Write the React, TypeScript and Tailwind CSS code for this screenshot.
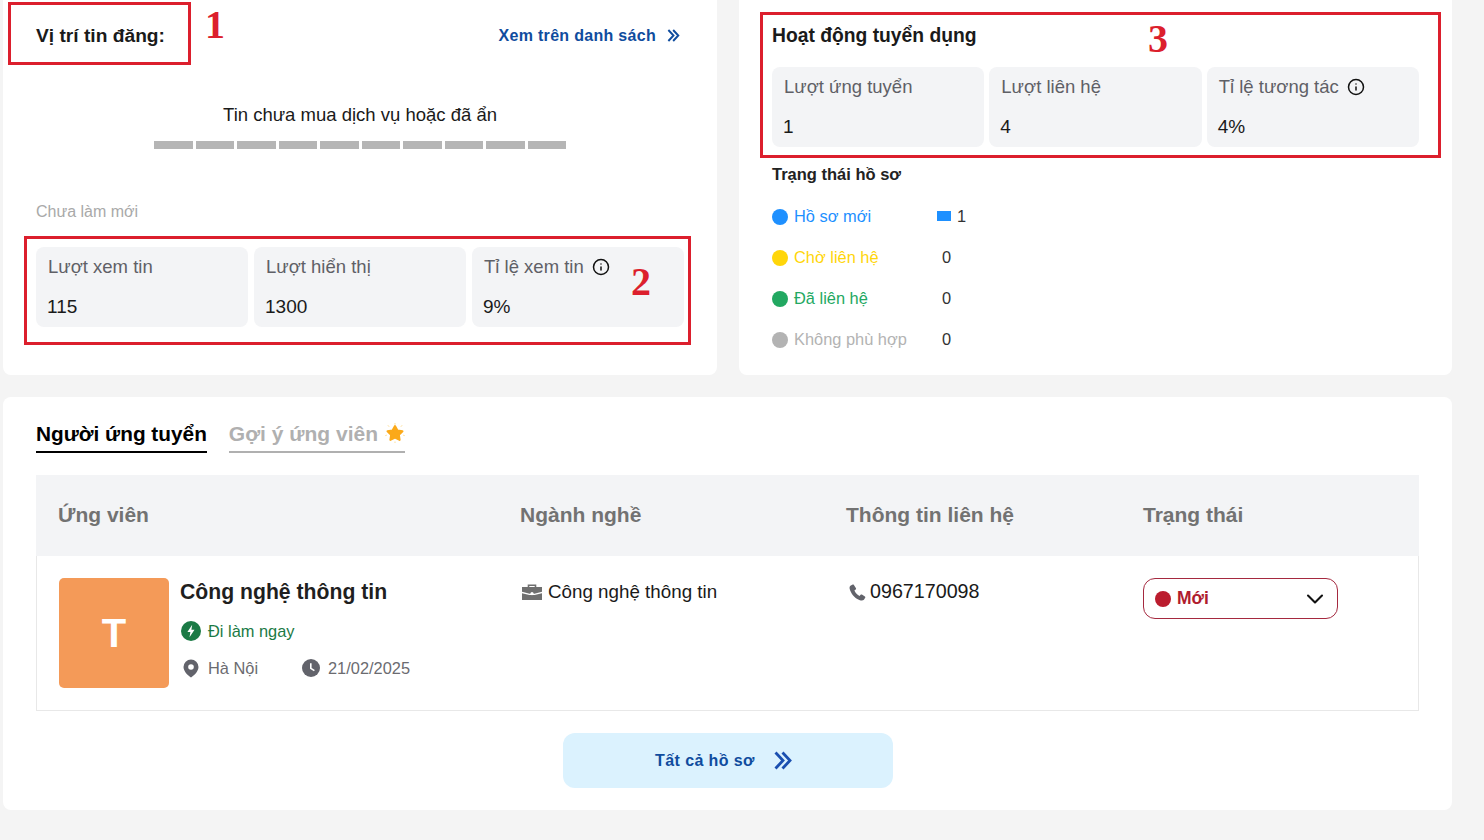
import { ChevronDown, Info } from "lucide-react";

const font = "font-['Liberation_Sans',Arial,sans-serif]";
const annotationNumber = "absolute font-['Liberation_Serif',serif] text-[40px] leading-none font-bold text-[#dc1f2d]";
const annotationBox = "absolute border-[3px] border-[#dc1f2d]";

function StatCard({ label, value, info }: { label: string; value: string; info?: boolean }) {
  return (
    <div className="flex h-20 flex-col rounded-lg bg-[#f3f4f6] px-3 pt-2">
      <div className="flex h-[24px] items-center gap-2 text-[18.5px] text-[#5f6066]">
        <span>{label}</span>
        {info && <Info size={18} strokeWidth={2} className="text-[#111]" />}
      </div>
      <div className="mt-4 -ml-px text-[19px] leading-6 text-[#1a1a1a]">{value}</div>
    </div>
  );
}

const statuses = [
  { label: "Hồ sơ mới", dot: "bg-[#1e90ff]", text: "text-[#1e90ff]", count: 1 },
  { label: "Chờ liên hệ", dot: "bg-[#ffd60a]", text: "text-[#ffd60a]", count: 0 },
  { label: "Đã liên hệ", dot: "bg-[#22a861]", text: "text-[#22a861]", count: 0 },
  { label: "Không phù hợp", dot: "bg-[#b3b3b3]", text: "text-[#b3b3b3]", count: 0 },
];

function DoubleChevron({ className }: { className: string }) {
  return (
    <svg viewBox="0 0 18 19" fill="none" stroke="currentColor" strokeWidth="2.8" className={className}>
      <path d="M1.5 1.5 9 9.5l-7.5 8" />
      <path d="M8.5 1.5 16 9.5l-7.5 8" />
    </svg>
  );
}

function BoltIcon() {
  return (
    <svg width="20" height="20" viewBox="0 0 20 20">
      <circle cx="10" cy="10" r="10" fill="#1b7a45" />
      <path d="M11.2 3.8 6.4 11h3l-.9 5.2 5-7.4h-3.1z" fill="#fff" />
    </svg>
  );
}

function PinIcon() {
  return (
    <svg width="16" height="19" viewBox="0 0 16 19">
      <path d="M8 0.5a7.5 7.5 0 0 0-7.5 7.5c0 4.6 5 9 7.5 10.5 2.5-1.5 7.5-5.9 7.5-10.5A7.5 7.5 0 0 0 8 0.5z" fill="#62636b" />
      <circle cx="8" cy="8" r="2.8" fill="#fff" />
    </svg>
  );
}

function ClockIcon() {
  return (
    <svg width="18" height="18" viewBox="0 0 18 18">
      <circle cx="9" cy="9" r="9" fill="#62636b" />
      <path d="M8.8 4.2v5.2l3.6 2.2" fill="none" stroke="#fff" strokeWidth="1.6" />
    </svg>
  );
}

function BriefcaseIcon() {
  return (
    <svg width="20" height="16" viewBox="0 0 20 16">
      <path d="M6.5 3V1.2h7V3" fill="none" stroke="#6f6f6f" strokeWidth="1.6" />
      <path d="M0 3h20v4.8l-7.6 1.9H7.6L0 7.8z" fill="#6f6f6f" />
      <path d="M0 9.2l7.4 1.9h5.2L20 9.2V16H0z" fill="#6f6f6f" />
      <circle cx="10" cy="9.6" r="1.6" fill="#fff" />
    </svg>
  );
}

function PhoneIcon() {
  return (
    <svg width="17" height="17" viewBox="0 0 17 17">
      <path d="M3.7.6 1.4 1.7C.4 2.3.3 4 1.1 6.2c1.9 5 5.5 8.6 9.8 10 1.7.5 3.2.4 4-.5l1.3-1.9c.3-.5.2-1-.3-1.3l-3-1.9c-.4-.3-.9-.2-1.3.2l-1 1.2c-2.2-.9-4.2-3-5.2-5.5l1.3-1c.4-.4.5-.9.3-1.3L4.9 1c-.3-.5-.8-.6-1.2-.4z" fill="#62636b" />
    </svg>
  );
}

function StarIcon() {
  return (
    <svg width="20" height="20" viewBox="0 0 20 20">
      <path d="M10 3l2.5 4.4 5 .9-3.600 3.600.7 5-4.600-2.200-4.600 2.200.7-5L2.500 8.300l5-.9z" fill="#fba919" strokeLinejoin="round" stroke="#fba919" strokeWidth="2" />
      <path d="M10 .2v1.400M3 2.400l1 1.200M17 2.400l-1 1.200M.4 12.600l1.300-.4M19.600 12.600l-1.300-.4M10 18.600v1.200" stroke="#fdd77f" strokeWidth="1" />
    </svg>
  );
}

export default function App() {
  return (
    <div className={`${font} relative h-[840px] overflow-hidden bg-[#f4f4f4] pl-[3px]`}>
      <div className="grid w-[1449px] grid-cols-[714px_713px] gap-x-[22px]">
        <section className="h-[375px] rounded-b-lg bg-white pr-[33px] pl-[33px]">
          <div className="flex h-[71px] items-center justify-between">
            <h2 className="pt-[2px] text-[19.2px] font-bold text-[#1a1a1a]">Vị trí tin đăng:</h2>
            <a className="mr-[4px] flex items-center gap-[11px] text-[16px] font-bold tracking-[0.3px] text-[#0f4c9e]">
              Xem trên danh sách
              <DoubleChevron className="h-[13px] w-[13px]" />
            </a>
          </div>
          <p className="mt-[32px] text-center text-[18.5px] leading-6 text-[#1a1a1a]">Tin chưa mua dịch vụ hoặc đã ẩn</p>
          <div className="mx-auto mt-[14px] flex h-2 w-[412px] gap-[3px]">
            {Array.from({ length: 10 }).map((_, i) => (
              <div key={i} className="flex-1 bg-[#b5b5b5]" />
            ))}
          </div>
          <p className="mt-[51px] text-[16px] leading-6 text-[#a9a9a9]">Chưa làm mới</p>
          <div className="mt-[23px] grid grid-cols-3 gap-[6px]">
            <StatCard label="Lượt xem tin" value="115" />
            <StatCard label="Lượt hiển thị" value="1300" />
            <StatCard label="Tỉ lệ xem tin" value="9%" info />
          </div>
        </section>

        <section className="h-[375px] rounded-b-lg bg-white pr-[33px] pl-[33px]">
          <h2 className="pt-[23px] text-[19.3px] leading-[26px] font-bold text-[#1a1a1a]">Hoạt động tuyển dụng</h2>
          <div className="mt-[18px] grid grid-cols-3 gap-[5px]">
            <StatCard label="Lượt ứng tuyển" value="1" />
            <StatCard label="Lượt liên hệ" value="4" />
            <StatCard label="Tỉ lệ tương tác" value="4%" info />
          </div>
          <h3 className="mt-[16px] text-[16.5px] leading-[22px] font-bold text-[#222]">Trạng thái hồ sơ</h3>
          <ul className="mt-[11px] flex flex-col">
            {statuses.map((s) => (
              <li key={s.label} className="flex h-[41px] items-center text-[16.4px]">
                <span className={`h-4 w-4 rounded-full ${s.dot}`} />
                <span className={`ml-[6px] w-[143px] ${s.text}`}>{s.label}</span>
                {s.count > 0 ? (
                  <span className="flex items-center gap-[6px] text-[#333]">
                    <span className="h-[10px] w-[14px] bg-[#1e90ff]" />
                    {s.count}
                  </span>
                ) : (
                  <span className="ml-[5px] text-[#333]">{s.count}</span>
                )}
              </li>
            ))}
          </ul>
        </section>
      </div>

      <section className="mt-[22px] h-[413px] w-[1449px] rounded-lg bg-white px-[33px]">
        <div className="flex gap-[22px] pt-[22px]">
          <div className="h-[34px] border-b-2 border-black pt-px text-[20.8px] leading-[28px] font-bold text-black">Người ứng tuyển</div>
          <div className="flex h-[34px] items-start gap-[7px] border-b-2 border-[#b0b0b0] pt-px text-[21px] leading-[28px] font-bold text-[#b0b0b0]">
            Gợi ý ứng viên
            <span className="mt-[3px]"><StarIcon /></span>
          </div>
        </div>

        <div className="mt-[22px] grid h-[81px] grid-cols-[484px_326px_297px_1fr] items-center bg-[#f3f4f6] pb-[2px] text-[21px] font-bold text-[#727272]">
          <div className="pl-[22px]">Ứng viên</div>
          <div>Ngành nghề</div>
          <div>Thông tin liên hệ</div>
          <div>Trạng thái</div>
        </div>

        <div className="grid h-[155px] grid-cols-[483px_326px_297px_1fr] border-x border-b border-[#e8e8e8] pt-[22px]">
          <div className="flex gap-[11px] pl-[22px]">
            <div className="flex h-[110px] w-[110px] items-center justify-center rounded-[5px] bg-[#f49a58] text-[40px] font-bold text-white">T</div>
            <div>
              <div className="text-[21.2px] leading-7 font-bold text-[#1f1f1f]">Công nghệ thông tin</div>
              <div className="mt-[15px] flex h-5 items-center gap-[7px] pl-px text-[16.4px] text-[#1b7a45]">
                <BoltIcon />
                Đi làm ngay
              </div>
              <div className="mt-[17px] flex h-5 items-center pl-[3px] text-[16.4px] text-[#6b6b70]">
                <PinIcon />
                <span className="ml-[9px] w-[94px]">Hà Nội</span>
                <ClockIcon />
                <span className="ml-2">21/02/2025</span>
              </div>
            </div>
          </div>
          <div className="flex h-7 items-center gap-[6px] pl-[2px] text-[18.8px] text-[#1a1a1a]">
            <BriefcaseIcon />
            Công nghệ thông tin
          </div>
          <div className="flex h-7 items-center gap-[4px] pl-[3px] text-[19.7px] text-[#1a1a1a]">
            <PhoneIcon />
            0967170098
          </div>
          <div>
            <div className="flex h-[41px] w-[195px] items-center rounded-xl border border-[#a5293f] pr-[8px] pl-[11px] text-[17.5px] font-bold text-[#b01c2e]">
              <span className="h-4 w-4 rounded-full bg-[#bb1c2e]" />
              <span className="ml-[6px] flex-1">Mới</span>
              <ChevronDown size={28} strokeWidth={1.8} className="text-[#111]" />
            </div>
          </div>
        </div>

        <div className="mt-[22px] flex justify-center">
          <a className="flex h-[55px] w-[330px] items-center justify-center gap-[19px] rounded-xl bg-[#dbf2fe] pr-[8px] text-[16px] font-bold tracking-[0.4px] text-[#0f4c9e]">
            Tất cả hồ sơ
            <DoubleChevron className="h-[19px] w-[18px] text-[#1a4fb0]" />
          </a>
        </div>
      </section>

      {/* red marks drawn over the page */}
      <div className={`${annotationBox} top-[2px] left-[8px] h-[63px] w-[183px]`} />
      <span className={`${annotationNumber} top-[5px] left-[205px]`}>1</span>
      <div className={`${annotationBox} top-[236px] left-[24px] h-[109px] w-[667px]`} />
      <span className={`${annotationNumber} top-[262px] left-[631px]`}>2</span>
      <div className={`${annotationBox} top-[12px] left-[760px] h-[146px] w-[681px]`} />
      <span className={`${annotationNumber} top-[19px] left-[1148px]`}>3</span>
    </div>
  );
}
